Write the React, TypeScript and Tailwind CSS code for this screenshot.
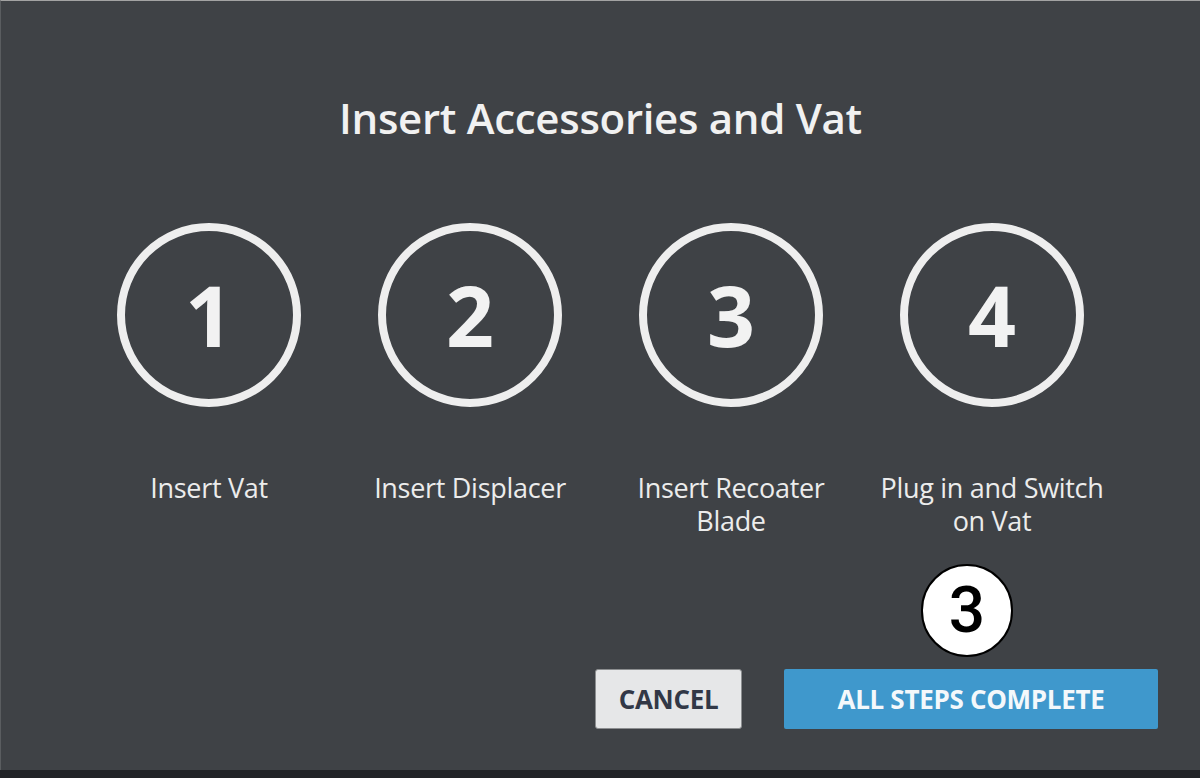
const steps = [
  { n: "1", label: "Insert Vat" },
  { n: "2", label: "Insert Displacer" },
  { n: "3", label: "Insert Recoater Blade" },
  { n: "4", label: "Plug in and Switch on Vat" },
];

export default function App() {
  return (
    <div
      className="flex h-[778px] w-[1200px] flex-col overflow-hidden bg-[#222427]"
      style={{ fontFamily: '"Open Sans", "Noto Sans", sans-serif' }}
    >
      <div className="flex h-[770px] flex-col border-l border-t border-l-[#5a5d60] border-t-[#a3a3a3] bg-[#3f4246]">
        <h1 className="pt-[91px] text-center text-[42px] font-semibold leading-[52px] tracking-[-0.3px] text-[#f1f1f1]">
          Insert Accessories and Vat
        </h1>

        <div className="mt-[79px] flex justify-center">
          {steps.map((s) => (
            <div key={s.n} className="flex w-[261px] flex-col items-center">
              <div className="flex h-[184px] w-[184px] items-center justify-center rounded-full border-[8px] border-[#eeeeee]">
                <span className="text-[84px] font-bold leading-none text-[#f2f2f2]">{s.n}</span>
              </div>
              <p className="mt-[64px] h-[70px] w-[232px] text-center text-[27px] leading-[33px] tracking-[-0.3px] text-[#ececec]">
                {s.label}
              </p>
            </div>
          ))}
        </div>

        <div className="mt-[128px] flex justify-end gap-[42px] pr-[42px]">
          <button className="h-[60px] w-[147px] rounded-[3px] border border-[#8c8e90] bg-[#e6e7e8] text-[26px] font-bold tracking-[-0.3px] text-[#323846]">
            CANCEL
          </button>
          <div className="relative">
            <button className="h-[60px] w-[374px] rounded-[2px] bg-[#3f98cc] text-[26px] font-bold tracking-[-0.3px] text-[#f4f8fb]">
              ALL STEPS COMPLETE
            </button>
            <div
              className="absolute left-[137px] top-[-105px] flex h-[93px] w-[92px] items-center justify-center rounded-full border-2 border-black bg-white text-[64px] font-medium leading-none text-black"
              style={{ fontFamily: "Roboto, sans-serif" }}
            >
              3
            </div>
          </div>
        </div>
      </div>
    </div>
  );
}
